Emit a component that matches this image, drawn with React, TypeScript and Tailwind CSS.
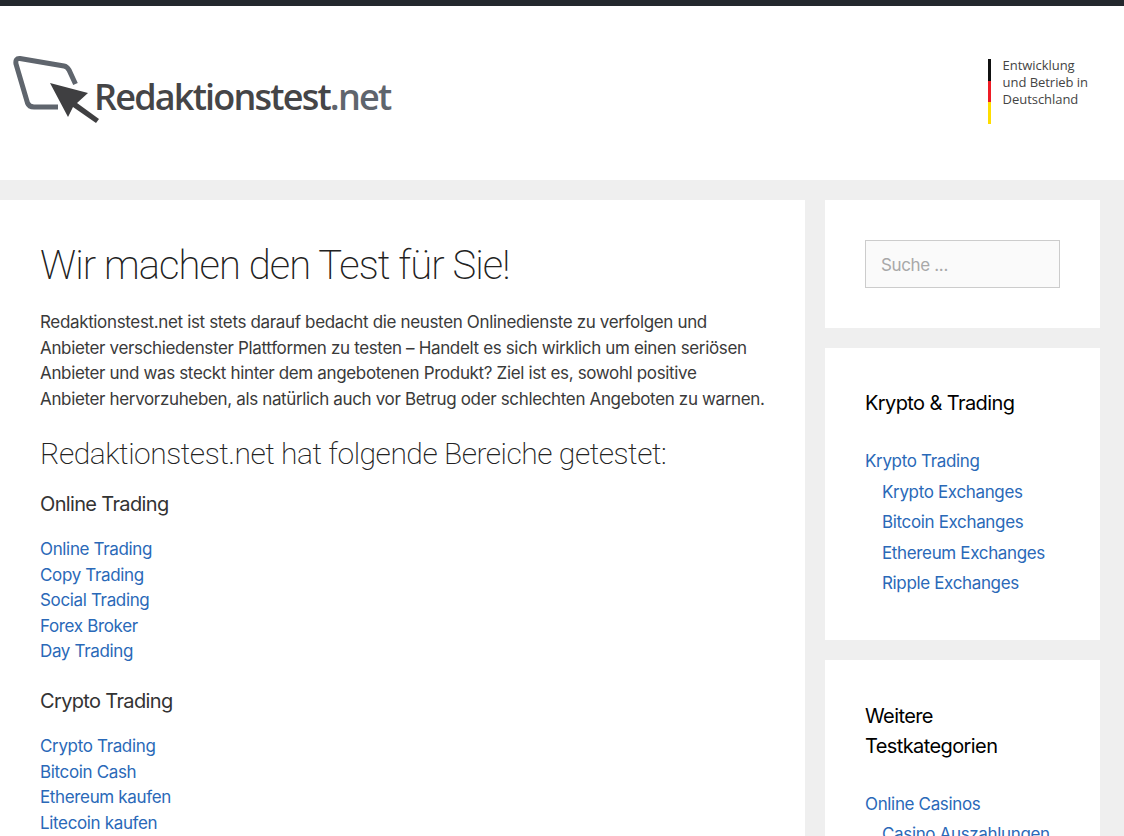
import React from "react";

const font = "font-['Inter','Liberation_Sans',sans-serif]";
const headingFont = "font-['Roboto','Liberation_Sans',sans-serif]";

function Logo() {
  return (
    <svg width="90" height="76" viewBox="13 50 90 76" className="shrink-0">
      <path
        d="M58 107 H34 Q29 107 27.500 103 L16 64 Q15 58 20 58.500 L64 66 Q67 66.500 69 70 L75.500 84"
        fill="none"
        stroke="#5f656d"
        strokeWidth="5"
      />
      <path d="M50 83 L88 93 L77 103 L99 119 L96 123 L73 107 L68 117 Z" fill="#3f3f41" />
    </svg>
  );
}

const cryptoLinks = ["Krypto Exchanges", "Bitcoin Exchanges", "Ethereum Exchanges", "Ripple Exchanges"];

function LinkList({ items }: { items: string[] }) {
  return (
    <ul className="mb-[21.5px]">
      {items.map((item) => (
        <li key={item}>
          <a className="text-[#2a69b8]">{item}</a>
        </li>
      ))}
    </ul>
  );
}

export default function App() {
  return (
    <div className={`h-[836px] overflow-hidden bg-[#efefef] text-[17px] leading-[25.5px] tracking-[-0.35px] text-[#3a3a3a] ${font}`}>
      <div className="h-[6px] bg-[#23282d]" />
      <header className="flex h-[174px] items-start justify-between bg-white">
        <div className="mt-[44px] ml-[13px] flex items-start">
          <Logo />
          <span className="mt-[22px] -ml-[9px] font-['Open_Sans',sans-serif] text-[36px] leading-[50px] font-semibold tracking-[-1.8px] text-[#454547]">
            Redaktionstest<span className="text-[#5f656d]">.net</span>
          </span>
        </div>
        <div className="mt-[53px] mr-[36px] flex gap-[12px]">
          <div className="flex h-[65px] w-[3px] flex-col">
            <div className="flex-1 bg-[#111111]" />
            <div className="flex-1 bg-[#ee1c25]" />
            <div className="flex-1 bg-[#ffdd00]" />
          </div>
          <div className="-mt-[2px] font-['Open_Sans',sans-serif] text-[13px] leading-[17px] tracking-[-0.05px] text-[#444444]">
            Entwicklung
            <br />
            und Betrieb in
            <br />
            Deutschland
          </div>
        </div>
      </header>

      <div className="mt-[20px] flex items-start">
        <main className="w-[805px] shrink-0 bg-white px-[40px] pt-[40px] pb-[40px]">
          <h1 className={`text-[40px] leading-[52px] font-extralight tracking-[-0.93px] text-[#222222] ${headingFont}`}>
            Wir machen den Test für Sie!
          </h1>
          <p className="mt-[18px] mb-[24px] whitespace-nowrap">
            Redaktionstest.net ist stets darauf bedacht die neusten Onlinedienste zu verfolgen und
            <br />
            Anbieter verschiedenster Plattformen zu testen – Handelt es sich wirklich um einen seriösen
            <br />
            Anbieter und was steckt hinter dem angebotenen Produkt? Ziel ist es, sowohl positive
            <br />
            Anbieter hervorzuheben, als natürlich auch vor Betrug oder schlechten Angeboten zu warnen.
          </p>
          <h2 className={`mb-[17px] text-[30px] leading-[36px] font-extralight tracking-[-0.48px] text-[#222222] ${headingFont}`}>
            Redaktionstest.net hat folgende Bereiche getestet:
          </h2>
          <h3 className="mb-[18px] text-[20px] leading-[30px] tracking-[-0.65px] text-[#333333]">Online Trading</h3>
          <LinkList items={["Online Trading", "Copy Trading", "Social Trading", "Forex Broker", "Day Trading"]} />
          <h3 className="mb-[18px] text-[20px] leading-[30px] tracking-[-0.65px] text-[#333333]">Crypto Trading</h3>
          <LinkList items={["Crypto Trading", "Bitcoin Cash", "Ethereum kaufen", "Litecoin kaufen", "Ripple kaufen"]} />
        </main>

        <aside className="ml-[20px] flex w-[275px] shrink-0 flex-col gap-[20px]">
          <section className="bg-white p-[40px]">
            <div className="flex h-[48px] w-[195px] items-center border border-[#cccccc] bg-[#fafafa] px-[15px] pt-[3px] text-[#a8a8a8]">
              Suche ...
            </div>
          </section>
          <section className="bg-white px-[40px] pt-[40px] pb-[43px]">
            <h4 className="mb-[31px] text-[20px] leading-[30px] tracking-[-0.6px] text-black">Krypto &amp; Trading</h4>
            <a className="text-[#2a69b8]">Krypto Trading</a>
            <ul className="mt-[5px] ml-[17px] flex flex-col gap-[5px]">
              {cryptoLinks.map((item) => (
                <li key={item}>
                  <a className="text-[#2a69b8]">{item}</a>
                </li>
              ))}
            </ul>
          </section>
          <section className="bg-white px-[40px] pt-[41px] pb-[40px]">
            <h4 className="mb-[31px] text-[20px] leading-[30px] tracking-[-0.6px] text-black">
              Weitere
              <br />
              Testkategorien
            </h4>
            <a className="text-[#2a69b8]">Online Casinos</a>
            <ul className="mt-[5px] ml-[17px] flex flex-col gap-[5px]">
              <li>
                <a className="text-[#2a69b8]">Casino Auszahlungen</a>
              </li>
            </ul>
          </section>
        </aside>
      </div>
    </div>
  );
}
